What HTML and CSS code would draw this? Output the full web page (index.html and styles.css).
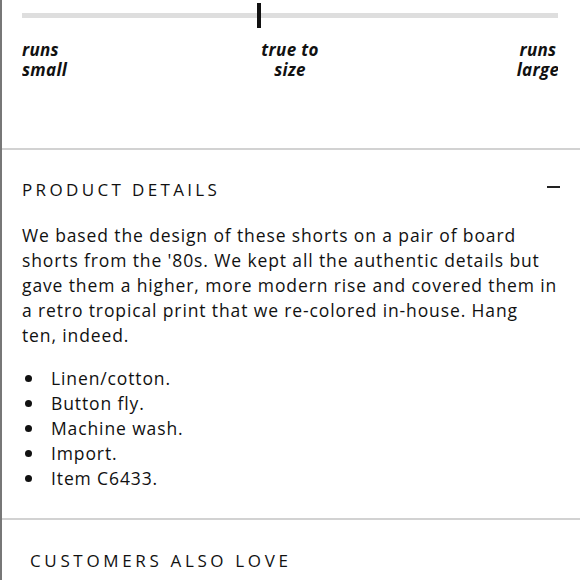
FILE: index.html
```html
<!DOCTYPE html>
<html>
<head>
<meta charset="utf-8">
<link rel="stylesheet" href="styles.css">
</head>
<body>
<div class="page">
  <section class="fit">
    <div class="track"><span class="marker"></span></div>
    <div class="labels">
      <span class="lab lab-left">runs<br>small</span>
      <span class="lab lab-mid">true to<br>size</span>
      <span class="lab lab-right">runs<br>large</span>
    </div>
  </section>
  <section class="details">
    <div class="details-head">
      <h2 class="heading">PRODUCT DETAILS</h2>
      <span class="minus"></span>
    </div>
    <p class="desc">We based the design of these shorts on a pair of board<br>shorts from the '80s. We kept all the authentic details but<br>gave them a higher, more modern rise and covered them in<br>a retro tropical print that we re-colored in-house. Hang<br>ten, indeed.</p>
    <ul class="bullets">
      <li>Linen/cotton.</li>
      <li>Button fly.</li>
      <li>Machine wash.</li>
      <li>Import.</li>
      <li>Item C6433.</li>
    </ul>
  </section>
  <section class="also">
    <h2 class="heading also-head">CUSTOMERS ALSO LOVE</h2>
  </section>
</div>
</body>
</html>
```
FILE: styles.css
```css
html, body {
  margin: 0;
  padding: 0;
  background: #fff;
}
body {
  font-family: "Open Sans", "Noto Sans", sans-serif;
  color: #111;
}
.page {
  border-left: 2px solid #777;
  min-height: 580px;
  box-sizing: border-box;
  overflow: hidden;
}
.fit {
  padding: 3px 22px 0 20px;
  height: 145px;
  border-bottom: 2px solid #d2d2d2;
}
.track {
  position: relative;
  height: 25px;
}
.track::before {
  content: "";
  position: absolute;
  left: 0;
  right: 0;
  top: 10px;
  height: 5px;
  background: #dedede;
}
.marker {
  position: absolute;
  left: 235px;
  top: 0;
  width: 4px;
  height: 25px;
  background: #111;
}
.labels {
  display: flex;
  margin-top: 12px;
  overflow-x: clip;
  overflow-y: visible;
  font-size: 17px;
  font-weight: 700;
  font-style: italic;
  line-height: 20px;
  letter-spacing: 0.3px;
}
.lab {
  flex: none;
}
.lab-left {
  width: 100px;
  text-align: left;
}
.lab-mid {
  width: 100px;
  margin-left: 118px;
  text-align: center;
}
.lab-right {
  width: 60px;
  margin-left: 168px;
  text-align: center;
}
.details {
  padding: 28px 20px 0 20px;
  height: 340px;
  border-bottom: 2px solid #d2d2d2;
}
.details-head {
  display: flex;
  justify-content: space-between;
  align-items: center;
}
.heading {
  margin: 0;
  font-size: 17px;
  font-weight: 400;
  letter-spacing: 3.35px;
  line-height: 24px;
}
.minus {
  width: 13px;
  height: 2px;
  background: #222;
  margin: 0 0 6px 0;
}
.desc {
  margin: 21px 0 0 0;
  font-size: 17.5px;
  line-height: 25px;
  letter-spacing: 0.88px;
}
.bullets {
  list-style: none;
  margin: 18px 0 0 0;
  padding: 0;
  font-size: 17.5px;
  line-height: 25px;
  letter-spacing: 0.88px;
}
.bullets li {
  display: flex;
  align-items: center;
}
.bullets li::before {
  content: "";
  width: 7px;
  height: 7px;
  border-radius: 50%;
  background: #111;
  margin: 0 19px 0 3px;
  flex: none;
}
.also {
  padding: 29px 28px 0 28px;
}
.also-head {
  letter-spacing: 3.65px;
}
```
